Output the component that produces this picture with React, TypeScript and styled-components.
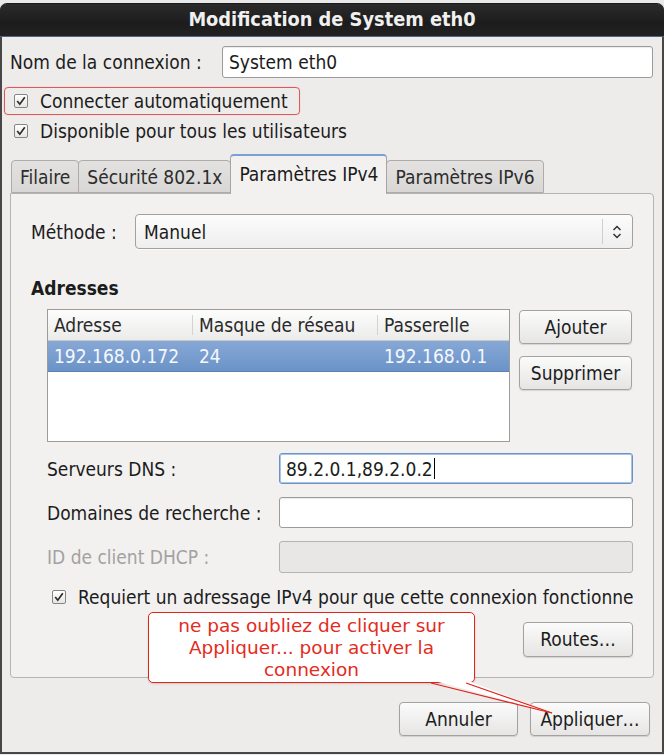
import React from "react";
import styled, { createGlobalStyle, css } from "styled-components";

const FONT = `"DejaVu Sans Condensed", "DejaVu Sans", "Liberation Sans", sans-serif`;
const SIZE = "19px";

const Global = createGlobalStyle`
  html, body { margin: 0; padding: 0; background: #e9e9e9; }
  body { font-family: ${FONT}; font-size: ${SIZE}; color: #1c1c1c; }
  * { box-sizing: border-box; }
`;

const Page = styled.div`
  width: 664px;
  height: 755px;
  padding-top: 3px;
  background: #e9e9e9;
`;

const Window = styled.div`
  position: relative;
  width: 664px;
  height: 751px;
  border: 2px solid #474747;
  border-top: 1px solid #1a1a1a;
  border-radius: 7px 7px 0 0;
  background: #edeceb;
  display: flex;
  flex-direction: column;
`;

const TitleBar = styled.div`
  height: 33px;
  flex: none;
  margin: 0 -2px;
  border-radius: 6px 6px 0 0;
  background: linear-gradient(#2b2b2b, #1c1c1c 60%, #222);
  border-bottom: 1px solid #4f6785;
  display: flex;
  align-items: center;
  justify-content: center;
  color: #f0f0f0;
  font-weight: bold;
  font-size: 19.8px;
  padding-bottom: 1px;
`;

const Body = styled.div`
  flex: 1;
  display: flex;
  flex-direction: column;
  padding: 9px 9px 0 8px;
`;

const FormRow = styled.div<{ $height: number; $indent?: number }>`
  display: flex;
  align-items: center;
  height: ${(p) => p.$height}px;
  padding-left: ${(p) => p.$indent ?? 0}px;
`;

const Label = styled.div<{ $width: number; $disabled?: boolean }>`
  width: ${(p) => p.$width}px;
  flex: none;
  color: ${(p) => (p.$disabled ? "#a3a2a1" : "#1c1c1c")};
  white-space: nowrap;
`;

const TextField = styled.div<{ $focused?: boolean; $disabled?: boolean }>`
  flex: 1;
  height: 100%;
  display: flex;
  align-items: center;
  padding: 0 6px;
  border-radius: 3px;
  white-space: nowrap;
  background: ${(p) => (p.$disabled ? "#e8e7e6" : "#ffffff")};
  border: 1px solid ${(p) => (p.$focused ? "#6c93c4" : p.$disabled ? "#b4b3b2" : "#9c9b9a")};
  box-shadow: ${(p) =>
    p.$focused
      ? "inset 0 0 0 1px #a9c3e4"
      : p.$disabled
      ? "none"
      : "inset 0 1px 1px rgba(0,0,0,0.08)"};
`;

const Caret = styled.span`
  display: inline-block;
  width: 1px;
  height: 21px;
  background: #000;
  margin-left: 1px;
`;

const CheckRow = styled.div<{ $highlighted?: boolean; $indent?: number }>`
  display: flex;
  align-items: center;
  gap: 12px;
  height: 29px;
  white-space: nowrap;
  padding-left: ${(p) => p.$indent ?? 4}px;
  ${(p) =>
    p.$highlighted &&
    css`
      align-self: flex-start;
      margin-left: -6px;
      padding-left: 9px;
      padding-right: 11px;
      height: 28px;
      margin-bottom: 1px;
      border: 1px solid #e0585a;
      border-radius: 4px;
      box-shadow: 0 0 1px rgba(224, 88, 90, 0.5);
    `}
`;

const CheckBox = styled.span`
  width: 14px;
  height: 14px;
  flex: none;
  border: 1px solid #858585;
  border-radius: 2px;
  background: linear-gradient(#ffffff, #e6e6e6);
  display: flex;
  align-items: center;
  justify-content: center;
`;

const Check = () => (
  <CheckBox>
    <svg width="12" height="12" viewBox="0 0 12 12">
      <path d="M2.2 6 L4.8 9.2 L9.8 2.2" fill="none" stroke="#2b2b2b" strokeWidth="1.7" />
    </svg>
  </CheckBox>
);

const TabStrip = styled.div`
  display: flex;
  align-items: flex-end;
  height: 39px;
  margin-top: 9px;
  padding-left: 1px;
  position: relative;
  z-index: 1;
`;

const Tab = styled.div<{ $active?: boolean }>`
  display: flex;
  align-items: center;
  padding: 0 8px;
  white-space: nowrap;
  border: 1px solid #adacab;
  border-bottom: none;
  border-radius: 4px 4px 0 0;
  margin-right: -1px;
  ${(p) =>
    p.$active
      ? css`
          height: 40px;
          margin-bottom: -1px;
          padding-bottom: 2px;
          background: #f2f1f0;
          border-color: #a6a5a4;
          border-top: 2px solid #7aa1d3;
          color: #1a1a1a;
          position: relative;
        `
      : css`
          height: 33px;
          background: linear-gradient(#e3e2e1, #d8d7d6);
          color: #2c2c2c;
          border-bottom: 1px solid #adacab;
        `}
`;

const Panel = styled.div`
  border: 1px solid #b5b4b3;
  border-radius: 0 4px 4px 4px;
  background: #f2f1f0;
  padding: 20px 20px 20px 20px;
  display: flex;
  flex-direction: column;
  margin-right: -1px;
`;

const Combo = styled.div`
  flex: 1;
  height: 100%;
  display: flex;
  align-items: center;
  padding-left: 8px;
  border: 1px solid #a2a1a0;
  border-radius: 4px;
  background: linear-gradient(#fcfcfc, #eeeeee);
  box-shadow: 0 1px 0 rgba(255, 255, 255, 0.8);
`;

const ComboText = styled.span`
  flex: 1;
`;

const ComboSep = styled.span`
  width: 1px;
  height: 25px;
  background: #cfcecd;
  margin-right: 7px;
`;

const ComboArrows = styled.span`
  width: 14px;
  margin-right: 8px;
  display: flex;
  align-items: center;
  justify-content: center;
`;

const SectionTitle = styled.div`
  font-weight: bold;
  margin-top: 29px;
  height: 20px;
  line-height: 20px;
`;

const AddressArea = styled.div`
  display: flex;
  gap: 9px;
  margin-top: 11px;
  padding-left: 16px;
`;

const Table = styled.div`
  width: 463px;
  height: 133px;
  background: #ffffff;
  border: 1px solid #9d9c9b;
  display: flex;
  flex-direction: column;
`;

const HeaderRow = styled.div`
  display: grid;
  grid-template-columns: 145px 185px 1fr;
  height: 31px;
  background: linear-gradient(#fdfdfd, #ebebea);
  border-bottom: 1px solid #c9c8c7;
`;

const HeaderCell = styled.div<{ $sep?: boolean }>`
  display: flex;
  align-items: center;
  padding-left: 6px;
  color: #2a2a2a;
  white-space: nowrap;
  position: relative;
  ${(p) =>
    p.$sep &&
    css`
      &::after {
        content: "";
        position: absolute;
        right: 0;
        top: 5px;
        bottom: 5px;
        width: 1px;
        background: #d4d3d2;
      }
    `}
`;

const DataRow = styled.div<{ $selected?: boolean }>`
  display: grid;
  grid-template-columns: 145px 185px 1fr;
  height: 31px;
  ${(p) =>
    p.$selected &&
    css`
      background: linear-gradient(#86a8d6, #6b93c7);
      border-bottom: 1px solid #5b82b7;
      color: #f6f8fc;
    `}
`;

const DataCell = styled.div`
  display: flex;
  align-items: center;
  padding-left: 6px;
  white-space: nowrap;
`;

const SideButtons = styled.div`
  display: flex;
  flex-direction: column;
  gap: 12px;
  padding-top: 1px;
`;

const Button = styled.button<{ $width: number; $height?: number }>`
  width: ${(p) => p.$width}px;
  height: ${(p) => p.$height ?? 34}px;
  font-family: ${FONT};
  font-size: ${SIZE};
  color: #1c1c1c;
  border: 1px solid #a3a2a1;
  border-radius: 4px;
  background: linear-gradient(#fbfbfb, #e6e5e4);
  box-shadow: 0 1px 1px rgba(0, 0, 0, 0.12);
  padding: 0;
  padding-bottom: 1px;
  display: flex;
  align-items: center;
  justify-content: center;
  white-space: nowrap;
`;

const FieldList = styled.div`
  display: flex;
  flex-direction: column;
  gap: 13px;
  margin-top: 11px;
`;

const Spacer = styled.div<{ $h: number }>`
  height: ${(p) => p.$h}px;
  flex: none;
`;

const RightRow = styled.div<{ $top: number; $right?: number; $gap?: number }>`
  display: flex;
  justify-content: flex-end;
  gap: ${(p) => p.$gap ?? 0}px;
  margin-top: ${(p) => p.$top}px;
  margin-right: ${(p) => p.$right ?? 0}px;
`;

const Callout = styled.div`
  position: absolute;
  left: 146px;
  top: 608px;
  width: 327px;
  height: 71px;
  background: #ffffff;
  border: 1px solid #e2231a;
  border-radius: 5px;
  box-shadow: 0 1px 2px rgba(0, 0, 0, 0.15);
  color: #e42b1d;
  font-family: "DejaVu Sans", sans-serif;
  font-size: 18.5px;
  line-height: 22px;
  text-align: center;
  padding-top: 2px;
  white-space: nowrap;
  z-index: 5;
`;

const Pointer = styled.svg`
  position: absolute;
  left: 270px;
  top: 67px;
  overflow: visible;
`;

export default function App() {
  return (
    <Page>
      <Global />
      <Window>
        <TitleBar>Modification de System eth0</TitleBar>
        <Body>
          <FormRow $height={32}>
            <Label $width={212}>Nom de la connexion :</Label>
            <TextField>System eth0</TextField>
          </FormRow>
          <Spacer $h={9} />
          <CheckRow $highlighted>
            <Check />
            <span>Connecter automatiquement</span>
          </CheckRow>
          <CheckRow>
            <Check />
            <span>Disponible pour tous les utilisateurs</span>
          </CheckRow>

          <TabStrip>
            <Tab>Filaire</Tab>
            <Tab>Sécurité 802.1x</Tab>
            <Tab $active>Paramètres IPv4</Tab>
            <Tab>Paramètres IPv6</Tab>
          </TabStrip>
          <Panel>
            <FormRow $height={35}>
              <Label $width={104}>Méthode :</Label>
              <Combo>
                <ComboText>Manuel</ComboText>
                <ComboSep />
                <ComboArrows>
                  <svg width="10" height="16" viewBox="0 0 10 16">
                    <path d="M1.5 6 L5 2.5 L8.5 6 M1.5 10 L5 13.5 L8.5 10" fill="none" stroke="#333" strokeWidth="1.5" />
                  </svg>
                </ComboArrows>
              </Combo>
            </FormRow>

            <SectionTitle>Adresses</SectionTitle>
            <AddressArea>
              <Table>
                <HeaderRow>
                  <HeaderCell $sep>Adresse</HeaderCell>
                  <HeaderCell $sep>Masque de réseau</HeaderCell>
                  <HeaderCell>Passerelle</HeaderCell>
                </HeaderRow>
                <DataRow $selected>
                  <DataCell>192.168.0.172</DataCell>
                  <DataCell>24</DataCell>
                  <DataCell>192.168.0.1</DataCell>
                </DataRow>
              </Table>
              <SideButtons>
                <Button $width={113}>Ajouter</Button>
                <Button $width={113}>Supprimer</Button>
              </SideButtons>
            </AddressArea>

            <FieldList>
              <FormRow $height={31} $indent={16}>
                <Label $width={232}>Serveurs DNS :</Label>
                <TextField $focused>
                  89.2.0.1,89.2.0.2
                  <Caret />
                </TextField>
              </FormRow>
              <FormRow $height={31} $indent={16}>
                <Label $width={232}>Domaines de recherche :</Label>
                <TextField />
              </FormRow>
              <FormRow $height={32} $indent={16}>
                <Label $width={232} $disabled>
                  ID de client DHCP :
                </Label>
                <TextField $disabled />
              </FormRow>
            </FieldList>

            <Spacer $h={9} />
            <CheckRow $indent={21}>
              <Check />
              <span>Requiert un adressage IPv4 pour que cette connexion fonctionne</span>
            </CheckRow>

            <RightRow $top={11}>
              <Button $width={110} $height={35}>
                Routes…
              </Button>
            </RightRow>
          </Panel>

          <RightRow $top={24} $right={3} $gap={12}>
            <Button $width={119}>Annuler</Button>
            <Button $width={120}>Appliquer…</Button>
          </RightRow>
        </Body>

        <Callout>
          ne pas oubliez de cliquer sur
          <br />
          Appliquer... pour activer la
          <br />
          connexion
          <Pointer width="140" height="40">
            <polygon points="12,0 47,0 133,33" fill="#ffffff" />
            <line x1="12" y1="3" x2="133" y2="33" stroke="#e2231a" strokeWidth="1.2" />
            <line x1="47" y1="3" x2="133" y2="33" stroke="#e2231a" strokeWidth="1.2" />
          </Pointer>
        </Callout>
      </Window>
    </Page>
  );
}
